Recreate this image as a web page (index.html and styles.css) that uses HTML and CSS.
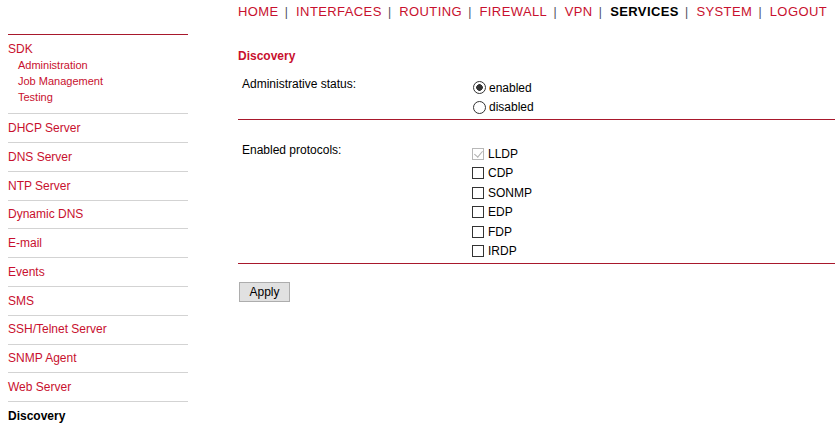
FILE: index.html
```html
<!DOCTYPE html>
<html lang="en">
<head>
    <meta charset="UTF-8">
    <meta name="viewport" content="width=device-width, initial-scale=1.0">
    <title>Services - Discovery</title>
    <link rel="stylesheet" href="styles.css">
</head>
<body>
    <div class="page">
        <!-- Left menu -->
        <aside class="sidebar">
            <div class="sdk">
                <a class="sdk-title" href="#">SDK</a>
                <ul class="sub-menu">
                    <li><a href="#">Administration</a></li>
                    <li><a href="#">Job Management</a></li>
                    <li><a href="#">Testing</a></li>
                </ul>
            </div>
            <ul class="side-menu">
                <li><a href="#">DHCP Server</a></li>
                <li><a href="#">DNS Server</a></li>
                <li><a href="#">NTP Server</a></li>
                <li><a href="#">Dynamic DNS</a></li>
                <li><a href="#">E-mail</a></li>
                <li><a href="#">Events</a></li>
                <li><a href="#">SMS</a></li>
                <li><a href="#">SSH/Telnet Server</a></li>
                <li><a href="#">SNMP Agent</a></li>
                <li><a href="#">Web Server</a></li>
                <li class="active">Discovery</li>
            </ul>
        </aside>

        <main class="content">
            <nav class="top-nav">
                <a href="#">HOME</a><span class="sep">|</span>
                <a href="#">INTERFACES</a><span class="sep">|</span>
                <a href="#">ROUTING</a><span class="sep">|</span>
                <a href="#">FIREWALL</a><span class="sep">|</span>
                <a href="#">VPN</a><span class="sep">|</span>
                <a href="#" class="current">SERVICES</a><span class="sep">|</span>
                <a href="#">SYSTEM</a><span class="sep">|</span>
                <a href="#">LOGOUT</a>
            </nav>

            <h2 class="page-title">Discovery</h2>

            <form id="discoveryForm">
                <div class="form-row status-row">
                    <div class="field-label">Administrative status:</div>
                    <div class="options">
                        <label class="option"><input type="radio" name="status" value="enabled" checked>enabled</label>
                        <label class="option"><input type="radio" name="status" value="disabled">disabled</label>
                    </div>
                </div>

                <div class="form-row protocols-row">
                    <div class="field-label">Enabled protocols:</div>
                    <div class="options">
                        <label class="option"><input type="checkbox" name="lldp" checked disabled>LLDP</label>
                        <label class="option"><input type="checkbox" name="cdp">CDP</label>
                        <label class="option"><input type="checkbox" name="sonmp">SONMP</label>
                        <label class="option"><input type="checkbox" name="edp">EDP</label>
                        <label class="option"><input type="checkbox" name="fdp">FDP</label>
                        <label class="option"><input type="checkbox" name="irdp">IRDP</label>
                    </div>
                </div>

                <button type="submit" class="apply-btn">Apply</button>
            </form>
        </main>
    </div>
</body>
</html>
```

FILE: styles.css
```css
body {
    margin: 0;
    font-family: "Liberation Sans", Arial, sans-serif;
    font-size: 12px;
    color: #000;
    background: #fff;
}
a {
    color: #c8102e;
    text-decoration: none;
}
ul {
    list-style: none;
    margin: 0;
    padding: 0;
}
.page {
    display: flex;
    gap: 50px;
    padding-left: 8px;
}

/* sidebar */
.sidebar {
    width: 180px;
    flex-shrink: 0;
    padding-top: 34px;
}
.sdk {
    border-top: 1px solid #a8182c;
    padding: 6.7px 0 7.8px;
}
.sdk-title {
    display: block;
    line-height: 14px;
}
.sub-menu {
    margin-top: 1.8px;
    padding-left: 10px;
    font-size: 11px;
    line-height: 16px;
}
.side-menu li {
    border-top: 1px solid #d3d3d3;
    padding: 6.7px 0 7.1px;
    line-height: 14px;
}
.side-menu li.active {
    font-weight: bold;
}

/* main area */
.content {
    flex: 1;
}
.top-nav {
    display: flex;
    padding-top: 4px;
    font-size: 13px;
    line-height: 16px;
    letter-spacing: 0.4px;
    white-space: nowrap;
}
.top-nav .sep {
    font-size: 12px;
    color: #4a4a5a;
    letter-spacing: 0;
    margin: 0 8.2px 0 6.2px;
}
.top-nav .current {
    color: #000;
    font-weight: bold;
}
.page-title {
    margin: 29.4px 0 0;
    font-size: 12px;
    font-weight: bold;
    line-height: 14px;
    color: #c8102e;
}
.form-row {
    display: grid;
    grid-template-columns: 234px 1fr;
    border-bottom: 1px solid #a8182c;
}
.field-label {
    padding-left: 4px;
    line-height: 14px;
}
.status-row {
    padding: 14px 0 2px;
}
.status-row .options {
    margin-top: 0.8px;
}
.protocols-row {
    padding: 23px 0 2.5px;
}
.protocols-row .options {
    margin-top: 1.1px;
}
.option {
    display: flex;
    align-items: center;
    height: 19.5px;
    line-height: 14px;
}
.protocols-row .option {
    height: 19.4px;
}

/* radio and checkbox */
.option input {
    appearance: none;
    -webkit-appearance: none;
    margin: 0;
    background: #fff;
    position: relative;
}
.option input[type="radio"] {
    width: 13px;
    height: 13px;
    margin: 0 3px 0 1px;
    border: 1px solid #333;
    border-radius: 50%;
}
.option input[type="radio"]:checked {
    background: radial-gradient(circle, #333 0 3px, #fff 3.6px);
}
.option input[type="checkbox"] {
    width: 12px;
    height: 12px;
    margin: 0 4px 0 0;
    border: 1px solid #333;
}
.option input[type="checkbox"]:disabled {
    border-color: #b8b8b8;
}
.option input[type="checkbox"]:checked::before {
    content: "";
    position: absolute;
    left: 3px;
    top: 0;
    width: 4px;
    height: 7px;
    border-right: 1px solid #333;
    border-bottom: 1px solid #333;
    transform: rotate(40deg);
}
.option input[type="checkbox"]:disabled:checked::before {
    border-color: #b0b0b0;
}

.apply-btn {
    margin: 18px 0 0 1px;
    width: 51px;
    height: 20px;
    padding: 0;
    font-family: "Liberation Sans", Arial, sans-serif;
    font-size: 12px;
    color: #000;
    background: #e1e1e1;
    border: 1px solid #adadad;
    border-radius: 0;
}
```
